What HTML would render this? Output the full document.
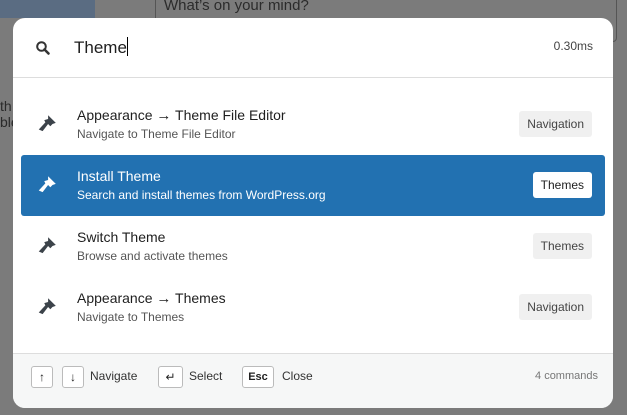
<!DOCTYPE html><html><head><style>
body{margin:0;width:627px;height:415px;overflow:hidden;background:#7b7b7b;font-family:"Liberation Sans",sans-serif;position:relative}
.bg{position:absolute;color:#2a2a2a;font-size:15px}
.m{position:absolute;left:13px;top:18px;width:600px;height:390px;background:#fff;border-radius:12px;overflow:hidden}
.hd{height:59px;border-bottom:1px solid #ddd;position:relative}
.q{position:absolute;left:61px;top:19px;font-size:17px;color:#1e1e1e}
.q:after{content:"";display:inline-block;width:1px;height:19px;background:#000;vertical-align:-3px}
.t{position:absolute;right:20px;top:21px;font-size:12px;color:#444}
.row{position:absolute;left:8px;width:584px;height:61px;border-radius:3px}
.row .ti{position:absolute;left:56px;top:13px;font-size:14px;color:#1e1e1e}
.row .su{position:absolute;left:56px;top:33px;font-size:12px;color:#555}
.row .b{position:absolute;right:13px;top:17px;height:26px;line-height:26px;padding:0 8px;font-size:12px;background:#f0f0f0;color:#444;border-radius:3px}
.row svg{position:absolute;left:15px;top:19px}
.sel{background:#2271b1}.sel .ti,.sel .su{color:#fff}.sel .b{background:#fff;color:#1e1e1e}
.ft{position:absolute;left:0;bottom:0;width:600px;height:54px;background:#f6f7f7;border-top:1px solid #ddd;font-size:12px;color:#333}
.k{position:absolute;top:12px;height:20px;border:1px solid #bbb;border-radius:3px;background:#fff;font-size:12px;text-align:center;line-height:20px;color:#222}
.l{position:absolute;top:15px}
</style></head><body>
<div class="bg" style="left:0;top:0;width:95px;height:18px;background:#5a6c82"></div>
<div class="bg" style="left:155px;top:-4px;width:460px;height:44px;border:1px solid #555;border-radius:4px;"><span style="position:absolute;left:8px;top:0px;color:#2b2b2b">What’s on your mind?</span></div>
<div class="bg" style="left:0;top:98px;font-size:14px">th<br>ble</div>
<div class="bg" style="left:150px;top:385px;font-size:14px">WordCamp • Brahmanbaria, Bangladesh</div>
<div class="m">
<div class="hd"><svg style="position:absolute;left:22px;top:22px" width="16" height="16" viewBox="0 0 16 16"><circle cx="6.5" cy="6.5" r="4.3" fill="none" stroke="#333" stroke-width="2"/><path d="M9.5 9.5l4 4" stroke="#333" stroke-width="2.6" stroke-linecap="round"/></svg><div class="q">Theme</div><div class="t">0.30ms</div></div>
<div class="row" style="top:76px"><svg width="22" height="22" viewBox="0 0 20 20"><path d="M11 2l7 7-3 1-2 2-2-2-5 6.5-3.5-1.5 6-6.5-1-2 3.5-1z" fill="#3c434a"/></svg><div class="ti">Appearance <span style="font-size:15px">→</span> Theme File Editor</div><div class="su">Navigate to Theme File Editor</div><div class="b">Navigation</div></div>
<div class="row sel" style="top:137px"><svg width="22" height="22" viewBox="0 0 20 20"><path d="M11 2l7 7-3 1-2 2-2-2-5 6.5-3.5-1.5 6-6.5-1-2 3.5-1z" fill="#fff"/></svg><div class="ti">Install Theme</div><div class="su">Search and install themes from WordPress.org</div><div class="b">Themes</div></div>
<div class="row" style="top:198px"><svg width="22" height="22" viewBox="0 0 20 20"><path d="M11 2l7 7-3 1-2 2-2-2-5 6.5-3.5-1.5 6-6.5-1-2 3.5-1z" fill="#3c434a"/></svg><div class="ti">Switch Theme</div><div class="su">Browse and activate themes</div><div class="b">Themes</div></div>
<div class="row" style="top:259px"><svg width="22" height="22" viewBox="0 0 20 20"><path d="M11 2l7 7-3 1-2 2-2-2-5 6.5-3.5-1.5 6-6.5-1-2 3.5-1z" fill="#3c434a"/></svg><div class="ti">Appearance <span style="font-size:15px">→</span> Themes</div><div class="su">Navigate to Themes</div><div class="b">Navigation</div></div>
<div class="ft">
<div class="k" style="left:18px;width:20px">↑</div><div class="k" style="left:49px;width:20px">↓</div><div class="l" style="left:77px">Navigate</div>
<div class="k" style="left:145px;width:23px">↵</div><div class="l" style="left:176px">Select</div>
<div class="k" style="left:229px;width:30px;font-weight:bold;font-size:11px">Esc</div><div class="l" style="left:269px">Close</div>
<div class="l" style="right:15px;font-size:11px;color:#777;top:16px">4 commands</div>
</div></div>
</body></html>
